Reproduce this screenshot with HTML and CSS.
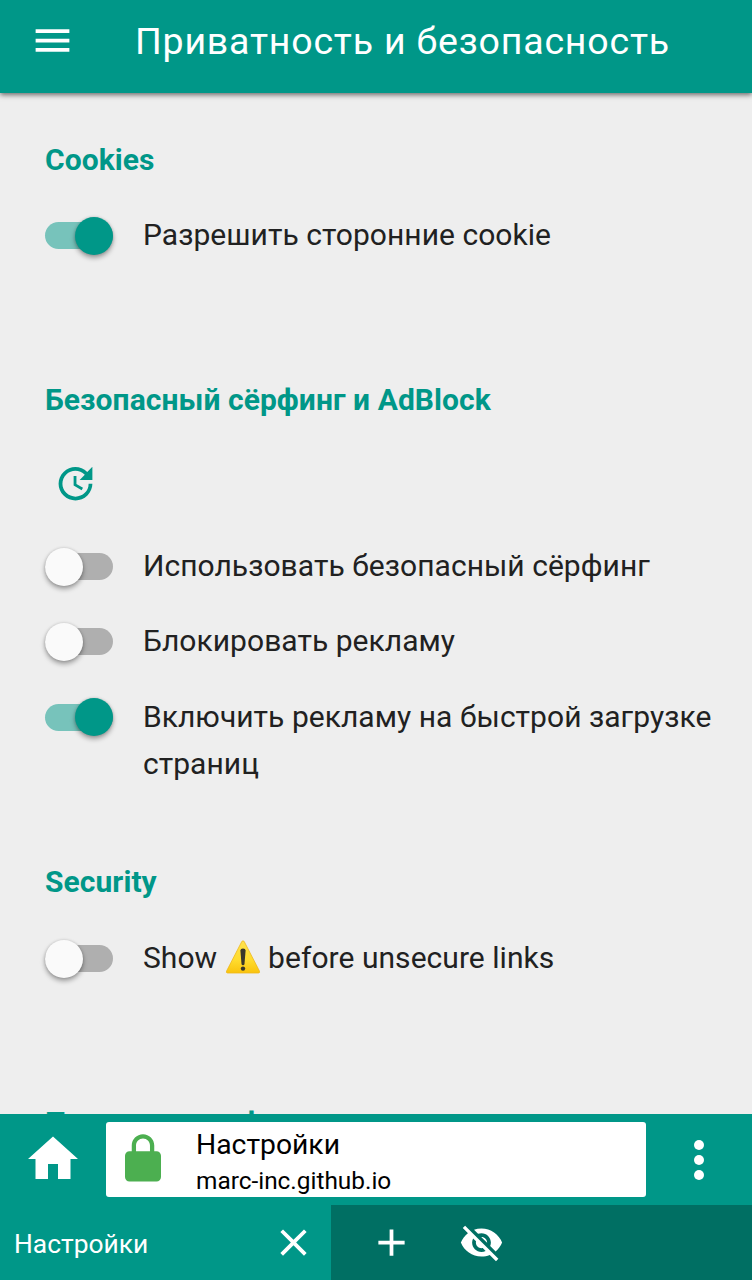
FILE: index.html
```html
<!DOCTYPE html>
<html lang="ru">
<head>
<meta charset="utf-8">
<title>Настройки</title>
<link rel="stylesheet" href="styles.css">
</head>
<body>
<div class="app">
  <header class="topbar">
    <svg class="menu-icon" viewBox="0 0 24 24"><path d="M3 18h18v-2H3v2zm0-5h18v-2H3v2zm0-7v2h18V6H3z"/></svg>
    <h1 class="title">Приватность и безопасность</h1>
  </header>
  <main class="content">
    <section class="section section-cookies">
      <h2 class="heading">Cookies</h2>
      <div class="row"><span class="switch on"><span class="knob"></span></span><span class="label">Разрешить сторонние cookie</span></div>
    </section>
    <section class="section section-surfing">
      <h2 class="heading">Безопасный сёрфинг и AdBlock</h2>
      <svg class="update-icon" viewBox="0 0 24 24"><path d="M21 10.12h-6.78l2.74-2.82c-2.73-2.7-7.15-2.8-9.88-.1-2.73 2.71-2.73 7.08 0 9.79s7.15 2.71 9.88 0C18.32 15.65 19 14.08 19 12.1h2c0 1.98-.88 4.55-2.64 6.29-3.51 3.48-9.21 3.48-12.72 0-3.5-3.47-3.53-9.11-.02-12.58s9.14-3.47 12.65 0L21 3v7.12zM12.5 8v4.25l3.5 2.08-.72 1.21L11 13V8h1.5z"/></svg>
      <div class="row"><span class="switch"><span class="knob"></span></span><span class="label">Использовать безопасный сёрфинг</span></div>
      <div class="row"><span class="switch"><span class="knob"></span></span><span class="label">Блокировать рекламу</span></div>
      <div class="row"><span class="switch on"><span class="knob"></span></span><span class="label">Включить рекламу на быстрой загрузке страниц</span></div>
    </section>
    <section class="section section-security">
      <h2 class="heading">Security</h2>
      <div class="row"><span class="switch"><span class="knob"></span></span><span class="label">Show <svg class="warning-icon" viewBox="0 0 36 36"><defs><linearGradient id="warn" x1="0" y1="0" x2="0" y2="1"><stop offset="0" stop-color="#ffe24d"/><stop offset=".6" stop-color="#ffdc2e"/><stop offset="1" stop-color="#f9c30d"/></linearGradient></defs><path d="M18 1.8q.8 0 1.4 1.1L34.4 32q.8 2-1 2H2.6q-1.8 0-1-2L16.6 2.9q.6-1.1 1.4-1.1z" fill="url(#warn)" stroke="#efb71b" stroke-width=".8"/><path d="M15.4 11.5q0-2 2.600-2t2.600 2L19.500 25q-.2 1.200-1.500 1.200t-1.500-1.200z" fill="#39372b"/><circle cx="18" cy="29.600" r="2.200" fill="#39372b"/></svg> before unsecure links</span></div>
    </section>
    <section class="section section-policy">
      <h2 class="heading">Политика конфиденциальности</h2>
    </section>
  </main>
  <nav class="address-bar">
    <svg class="home-icon" viewBox="0 0 24 24"><path d="M10 20v-6h4v6h5v-8h3L12 3 2 12h3v8z"/></svg>
    <div class="address">
      <svg class="lock-icon" viewBox="0 0 24 24"><path d="M18 8.500h-1V6c0-2.760-2.240-5-5-5S7 3.240 7 6v2.500H6c-1.100 0-2 .9-2 2v9.500c0 1.100.9 2 2 2h12c1.100 0 2-.9 2-2v-9.500c0-1.100-.9-2-2-2zM8.900 8.500V6c0-1.710 1.390-3.100 3.100-3.100s3.100 1.390 3.100 3.100v2.500H8.900z"/></svg>
      <div class="address-text"><div class="page-name">Настройки</div><div class="page-host">marc-inc.github.io</div></div>
    </div>
    <svg class="more-icon" viewBox="0 0 24 24"><circle cx="12" cy="6" r="2"/><circle cx="12" cy="12" r="2"/><circle cx="12" cy="18" r="2"/></svg>
  </nav>
  <footer class="tabs">
    <div class="tab"><span class="tab-name">Настройки</span><svg class="tab-icon" viewBox="0 0 24 24"><path d="M19 6.410 17.590 5 12 10.590 6.410 5 5 6.410 10.590 12 5 17.590 6.410 19 12 13.410 17.590 19 19 17.590 13.410 12z"/></svg></div>
    <div class="actions">
      <svg class="tab-icon" viewBox="0 0 24 24"><path d="M19 13h-6v6h-2v-6H5v-2h6V5h2v6h6v2z"/></svg>
      <svg class="tab-icon" viewBox="0 0 24 24"><path d="M12 7c2.760 0 5 2.240 5 5 0 .65-.13 1.260-.36 1.830l2.920 2.920c1.510-1.260 2.700-2.890 3.430-4.750-1.730-4.390-6-7.500-11-7.500-1.400 0-2.740.25-3.980.7l2.160 2.160C10.740 7.130 11.350 7 12 7zM2 4.270l2.280 2.280.46.46C3.080 8.300 1.780 10.020 1 12c1.730 4.390 6 7.500 11 7.500 1.550 0 3.030-.3 4.380-.84l.42.42L19.730 22 21 20.730 3.270 3 2 4.270zM7.530 9.800l1.550 1.550c-.05.21-.08.43-.08.65 0 1.660 1.340 3 3 3 .22 0 .44-.03.65-.08l1.550 1.550c-.67.33-1.410.53-2.200.53-2.760 0-5-2.240-5-5 0-.79.2-1.530.53-2.200zm4.310-.78 3.150 3.150.02-.16c0-1.660-1.340-3-3-3l-.17.01z"/></svg>
    </div>
  </footer>
</div>
</body>
</html>
```
FILE: styles.css
```css
* { box-sizing: border-box; }
body { margin: 0; font-family: Roboto, "Noto Sans", sans-serif; background: #eee; }
svg { display: block; flex: none; fill: #fff; }
.app { display: flex; flex-direction: column; width: 752px; height: 1280px; overflow: hidden; }

.topbar { display: flex; align-items: center; flex: none; height: 93px; padding: 0 0 12px 30px; background: #009788; color: #fff; box-shadow: 0 2px 5px rgba(0, 0, 0, .55); z-index: 1; }
.menu-icon { width: 45px; height: 45px; }
.title { margin: 0 0 0 60px; font-size: 37.5px; font-weight: 400; line-height: 48px; letter-spacing: .8px; white-space: nowrap; }

.content { flex: 1; min-height: 0; overflow: hidden; padding: 44px 30px 0 45px; color: #212121; }
.heading { margin: 0; color: #009788; font-size: 30px; font-weight: 700; line-height: 46px; letter-spacing: .06px; white-space: nowrap; }
.section-cookies { height: 240px; }
.section-surfing { height: 482.4px; }
.section-security { height: 240.6px; }
.row { display: flex; align-items: flex-start; gap: 30px; margin-top: 28.4px; font-size: 30px; line-height: 47px; }
.section-security .row { margin-top: 29px; }
.section-surfing .row:nth-of-type(1) { margin-top: 36px; }
.label { flex: 1; letter-spacing: .04px; }
.update-icon { width: 45px; height: 45px; margin: 38px 0 0 7.5px; fill: #009788; }

.switch { display: flex; align-items: center; flex: none; width: 68px; height: 27px; margin-top: 11px; border-radius: 14px; background: #afafaf; }
.knob { width: 38px; height: 38px; border-radius: 50%; background: #fafafa; box-shadow: 0 3px 5px rgba(0, 0, 0, .35), 0 0 3px rgba(0, 0, 0, .15); }
.switch.on { justify-content: flex-end; background: #77c3bb; }
.switch.on .knob { background: #009788; }
.warning-icon { display: inline-block; width: 36px; height: 36px; vertical-align: -7px; }

.address-bar { display: flex; align-items: center; flex: none; height: 91px; padding: 0 23px; background: #009788; }
.home-icon, .more-icon { width: 60px; height: 60px; }
.home-icon { margin-top: -1px; }
.address { display: flex; align-items: center; width: 540px; height: 75px; margin: 0 23px; padding-left: 10px; border-radius: 3px; background: #fff; color: #000; }
.lock-icon { width: 54px; height: 54px; margin-top: -1px; fill: #4caf50; }
.address-text { margin: 4px 0 0 26px; }
.page-name { font-size: 28.3px; line-height: 38px; }
.page-host { font-size: 24.4px; line-height: 34px; }

.tabs { display: flex; flex: none; height: 75px; background: #006f63; }
.tab { display: flex; align-items: center; justify-content: space-between; width: 331px; padding: 0 15px 0 14px; background: #009788; color: #fff; }
.tab-name { padding-top: 2px; font-size: 26.4px; }
.tab-icon { width: 45px; height: 45px; }
.actions { display: flex; align-items: center; gap: 45px; padding-left: 38px; }
```
